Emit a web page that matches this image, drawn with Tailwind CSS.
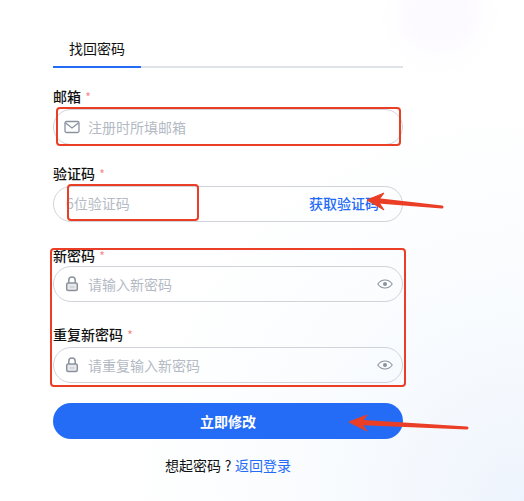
<!DOCTYPE html>
<html lang="zh-CN">
  <head>
    <meta charset="UTF-8" />
    <meta name="viewport" content="width=device-width, initial-scale=1.0" />
    <script src="https://cdn.jsdelivr.net/npm/@tailwindcss/browser@4"></script>
    <title>找回密码</title>
  </head>
  <body class="relative h-[501px] w-[524px] overflow-hidden bg-white font-['Noto_Sans_CJK_SC',sans-serif] text-sm text-[#111]">
    <!-- page background -->
    <div class="absolute inset-0 bg-[radial-gradient(circle_at_100%_100%,#eef4fd_0%,#f8fbfe_25%,#ffffff_55%)]"></div>
    <div class="absolute left-[395px] top-[-30px] h-[88px] w-[88px] rounded-full bg-[#fcfaff] blur-[10px]"></div>

    <!-- form -->
    <div class="relative ml-[53px] w-[350px] pt-[30px]">
      <div class="flex border-b-2 border-[#dfe3e8]">
        <div class="relative -mb-[2px] h-[38px] w-[88px] border-b-2 border-[#246bf6] pl-4 leading-[36px]">找回密码</div>
      </div>

      <form>
        <div class="mt-[18px]">
          <label class="block h-5 font-medium leading-5">邮箱 <span class="ml-px text-xs font-normal text-[#f78989]">*</span></label>
          <div class="mt-[3px] flex h-9 items-center rounded-[18px] border border-[#d0d3da] pl-[10px] pr-3">
            <svg class="h-4 w-4 shrink-0" viewBox="0 0 16 16" fill="none" stroke="#8b929e" stroke-width="1.3"><rect x="1" y="2.500" width="14" height="11" rx="1.500" /><path d="M1.500 4l6.500 5 6.500-5" /></svg>
            <input class="ml-2 w-full outline-none placeholder:text-[#b4bac4]" type="text" placeholder="注册时所填邮箱" />
          </div>
        </div>

        <div class="mt-[18px]">
          <label class="block h-5 font-medium leading-5">验证码 <span class="ml-px text-xs font-normal text-[#f78989]">*</span></label>
          <div class="mt-[3px] flex h-9 items-center rounded-[18px] border border-[#d0d3da] pb-[2px] pl-3 pr-[23px]">
            <input class="w-full outline-none placeholder:text-[#b4bac4]" type="text" placeholder="6位验证码" />
            <button class="shrink-0 font-medium text-[#246bf6]" type="button">获取验证码</button>
          </div>
        </div>

        <div class="mt-[23px]">
          <label class="block h-5 font-medium leading-5">新密码 <span class="ml-px text-xs font-normal text-[#f78989]">*</span></label>
          <div class="mt-[1px] flex h-9 items-center rounded-[18px] border border-[#d0d3da] pl-[10px] pr-[9px]">
            <svg class="h-4 w-4 shrink-0" viewBox="0 0 16 16" fill="none" stroke="#8b929e" stroke-width="1.500"><path d="M4.800 7V4.300a3.200 3.200 0 0 1 6.400 0V7" /><rect x="2.700" y="7" width="10.600" height="7.600" rx="1.500" fill="#8b929e" fill-opacity=".2" /><path d="M6 11h.7M7.700 11h.7M9.400 11h.7" stroke-width="1" /></svg>
            <input class="ml-2 w-full outline-none placeholder:text-[#b4bac4]" type="password" placeholder="请输入新密码" />
            <svg class="h-4 w-4 shrink-0" viewBox="0 0 16 16" fill="none" stroke="#8b929e" stroke-width="1.100"><path d="M.8 8C2.600 5.300 5 4 8 4s5.400 1.300 7.200 4c-1.800 2.700-4.200 4-7.200 4S2.600 10.700.8 8z" /><circle cx="8" cy="8" r="2" fill="#8b929e" stroke="none" /></svg>
          </div>
        </div>

        <div class="mt-[22px]">
          <label class="block h-5 font-medium leading-5">重复新密码 <span class="ml-px text-xs font-normal text-[#f78989]">*</span></label>
          <div class="mt-[3px] flex h-9 items-center rounded-[18px] border border-[#d0d3da] pl-[10px] pr-[9px]">
            <svg class="h-4 w-4 shrink-0" viewBox="0 0 16 16" fill="none" stroke="#8b929e" stroke-width="1.500"><path d="M4.800 7V4.300a3.200 3.200 0 0 1 6.400 0V7" /><rect x="2.700" y="7" width="10.600" height="7.600" rx="1.500" fill="#8b929e" fill-opacity=".2" /><path d="M6 11h.7M7.700 11h.7M9.400 11h.7" stroke-width="1" /></svg>
            <input class="ml-2 w-full outline-none placeholder:text-[#b4bac4]" type="password" placeholder="请重复输入新密码" />
            <svg class="h-4 w-4 shrink-0" viewBox="0 0 16 16" fill="none" stroke="#8b929e" stroke-width="1.100"><path d="M.8 8C2.600 5.300 5 4 8 4s5.400 1.300 7.200 4c-1.800 2.700-4.200 4-7.200 4S2.600 10.700.8 8z" /><circle cx="8" cy="8" r="2" fill="#8b929e" stroke="none" /></svg>
          </div>
        </div>

        <button class="mt-5 block h-9 w-full rounded-[18px] bg-[#246bf6] font-bold text-white" type="button">立即修改</button>
      </form>

      <p class="mt-4 text-center leading-5">想起密码<span class="inline-block w-[14px] text-center">?</span><a class="text-[#246bf6]" href="#">返回登录</a></p>
    </div>

    <!-- red markup drawn over the screenshot -->
    <div class="absolute left-[56px] top-[107px] h-[39px] w-[345px] rounded-[4px] border-2 border-[#ea3f26]"></div>
    <div class="absolute left-[67px] top-[184px] h-[37px] w-[132px] rounded-[4px] border-2 border-[#ea3f26]"></div>
    <div class="absolute left-[50px] top-[248px] h-[139px] w-[356px] rounded-[4px] border-2 border-[#ea3f26]"></div>
    <svg class="absolute inset-0" width="524" height="501" fill="#ea3f26" stroke="#ea3f26">
      <path d="M442 207L372 201.500L372 199z" stroke-width="3" stroke-linejoin="round" />
      <path d="M367 200L384 193L378 201L384 210z" stroke-width="1" />
      <path d="M467 428L356 423.500L356 421z" stroke-width="3" stroke-linejoin="round" />
      <path d="M349 422L367 415L361 423L367 431z" stroke-width="1" />
    </svg>
  </body>
</html>
